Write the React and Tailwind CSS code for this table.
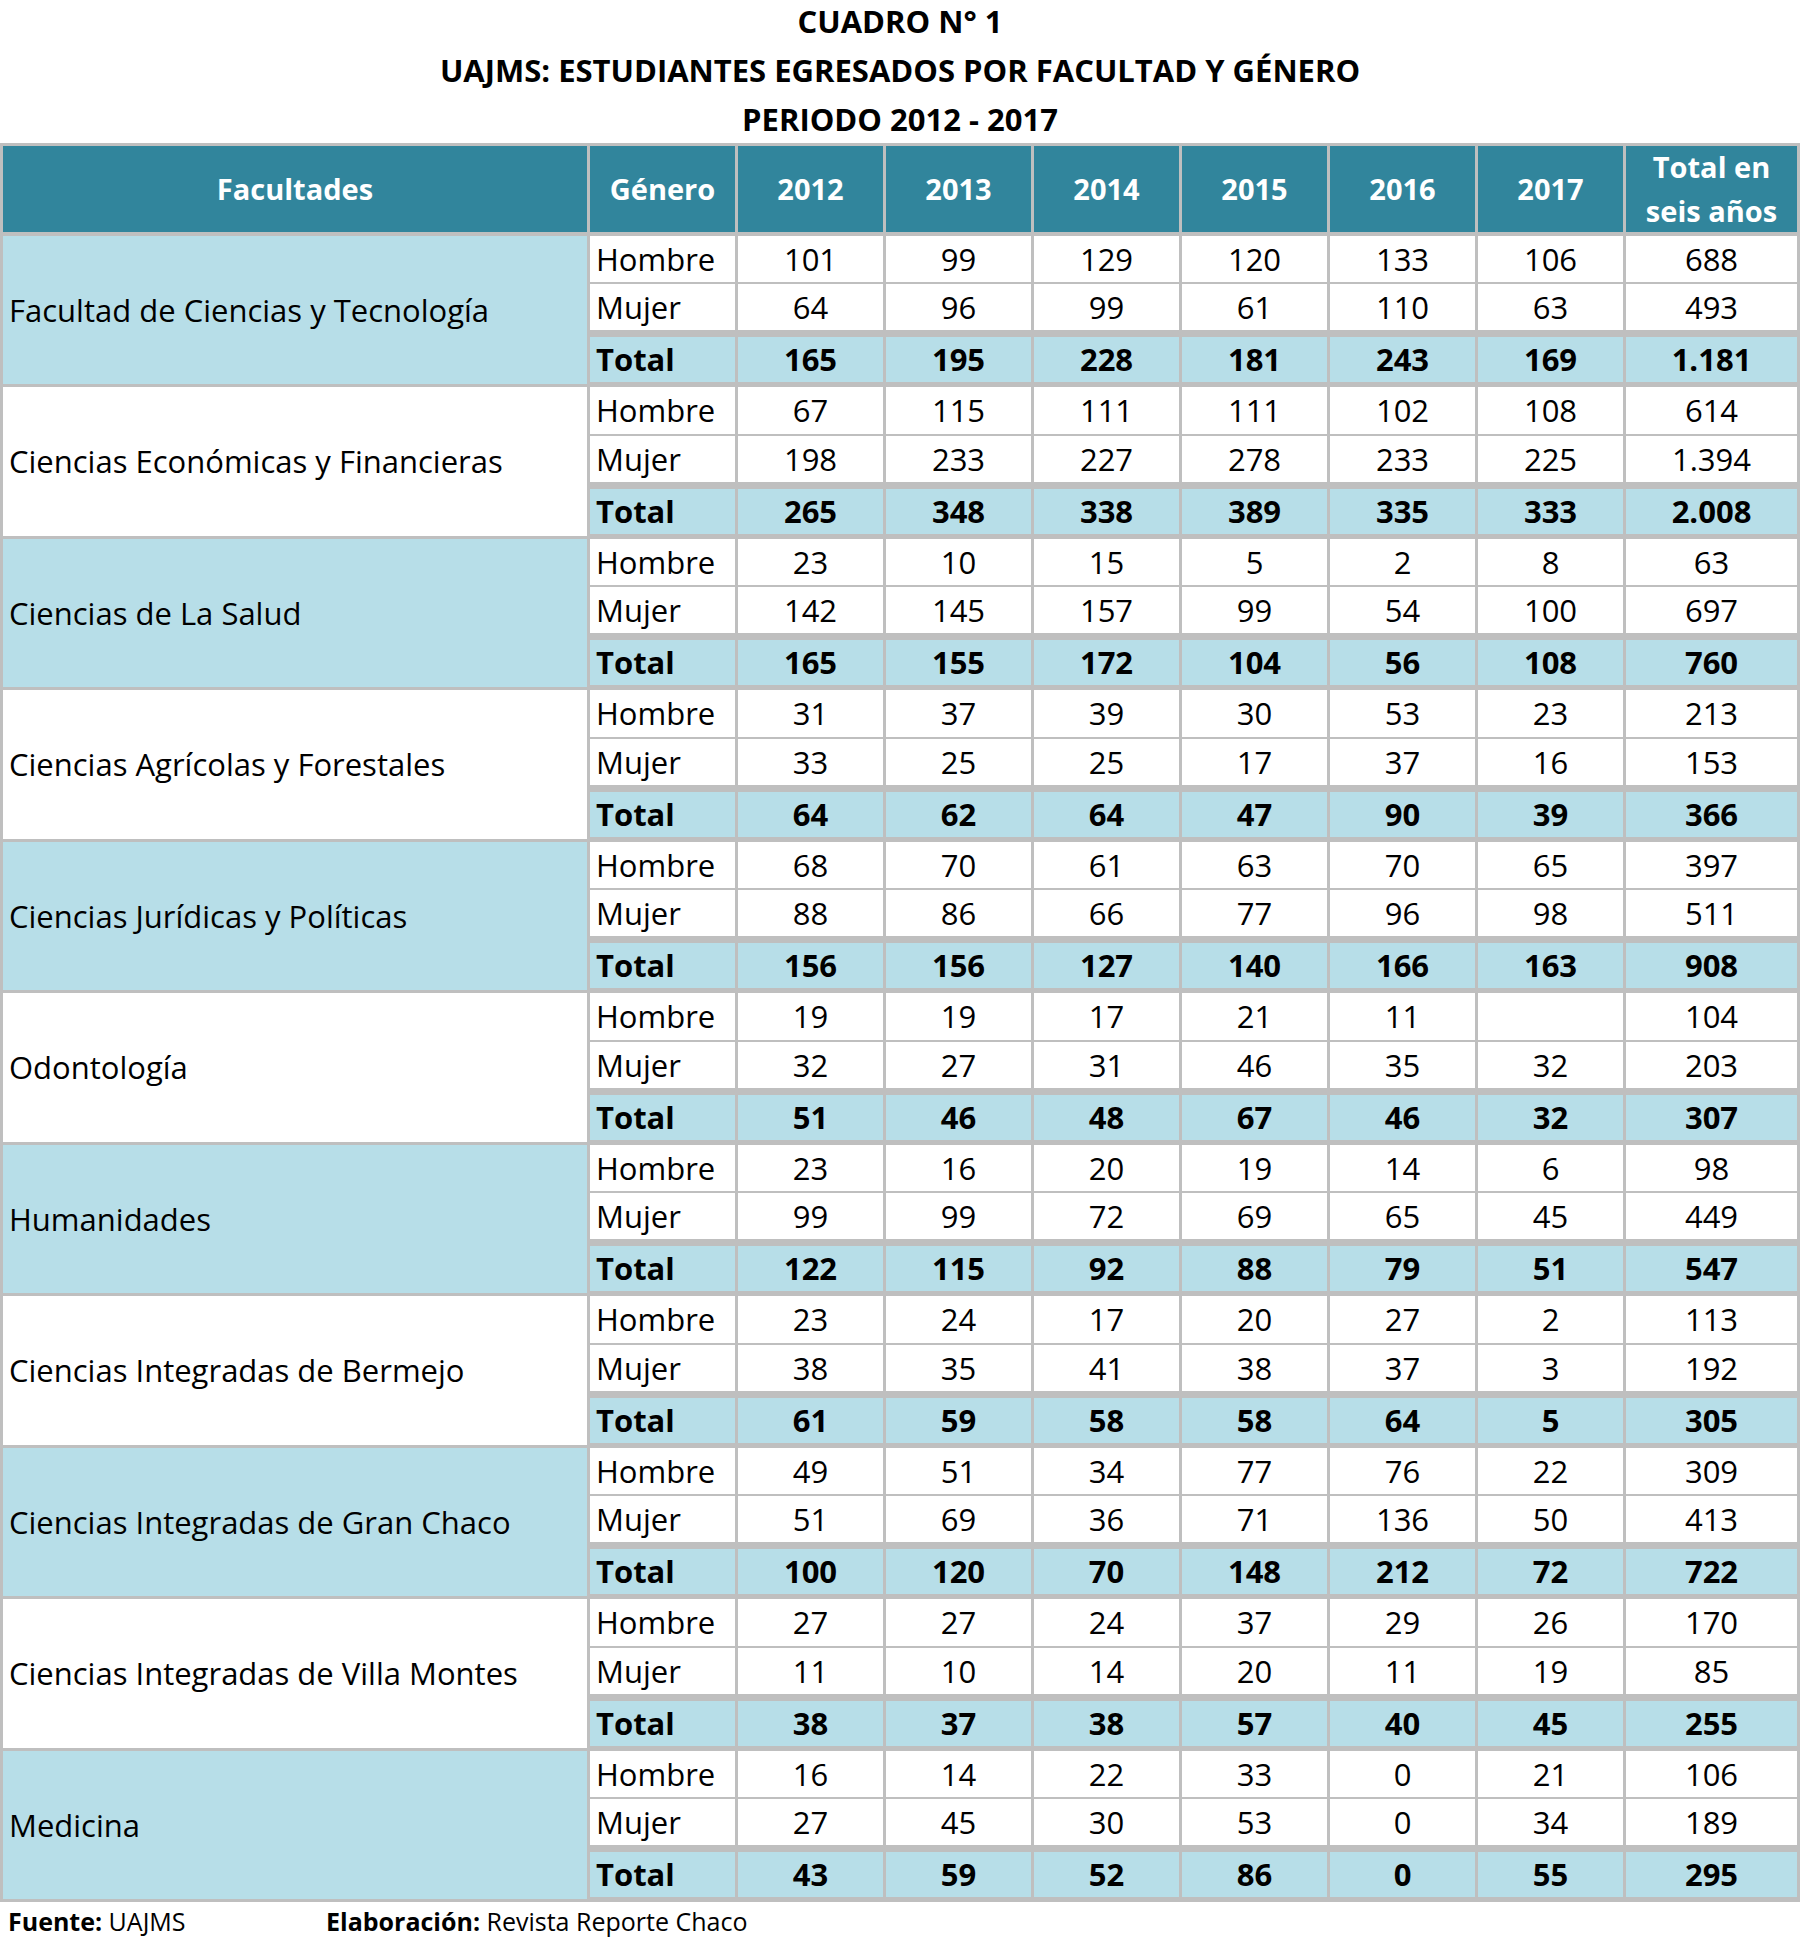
import React from 'react';

const facultades = [
    {
        nombre: 'Facultad de Ciencias y Tecnología',
        hombre: ['101', '99', '129', '120', '133', '106', '688'],
        mujer: ['64', '96', '99', '61', '110', '63', '493'],
        total: ['165', '195', '228', '181', '243', '169', '1.181'],
    },
    {
        nombre: 'Ciencias Económicas y Financieras',
        hombre: ['67', '115', '111', '111', '102', '108', '614'],
        mujer: ['198', '233', '227', '278', '233', '225', '1.394'],
        total: ['265', '348', '338', '389', '335', '333', '2.008'],
    },
    {
        nombre: 'Ciencias de La Salud',
        hombre: ['23', '10', '15', '5', '2', '8', '63'],
        mujer: ['142', '145', '157', '99', '54', '100', '697'],
        total: ['165', '155', '172', '104', '56', '108', '760'],
    },
    {
        nombre: 'Ciencias Agrícolas y Forestales',
        hombre: ['31', '37', '39', '30', '53', '23', '213'],
        mujer: ['33', '25', '25', '17', '37', '16', '153'],
        total: ['64', '62', '64', '47', '90', '39', '366'],
    },
    {
        nombre: 'Ciencias Jurídicas y Políticas',
        hombre: ['68', '70', '61', '63', '70', '65', '397'],
        mujer: ['88', '86', '66', '77', '96', '98', '511'],
        total: ['156', '156', '127', '140', '166', '163', '908'],
    },
    {
        nombre: 'Odontología',
        hombre: ['19', '19', '17', '21', '11', '', '104'],
        mujer: ['32', '27', '31', '46', '35', '32', '203'],
        total: ['51', '46', '48', '67', '46', '32', '307'],
    },
    {
        nombre: 'Humanidades',
        hombre: ['23', '16', '20', '19', '14', '6', '98'],
        mujer: ['99', '99', '72', '69', '65', '45', '449'],
        total: ['122', '115', '92', '88', '79', '51', '547'],
    },
    {
        nombre: 'Ciencias Integradas de Bermejo',
        hombre: ['23', '24', '17', '20', '27', '2', '113'],
        mujer: ['38', '35', '41', '38', '37', '3', '192'],
        total: ['61', '59', '58', '58', '64', '5', '305'],
    },
    {
        nombre: 'Ciencias Integradas de Gran Chaco',
        hombre: ['49', '51', '34', '77', '76', '22', '309'],
        mujer: ['51', '69', '36', '71', '136', '50', '413'],
        total: ['100', '120', '70', '148', '212', '72', '722'],
    },
    {
        nombre: 'Ciencias Integradas de Villa Montes',
        hombre: ['27', '27', '24', '37', '29', '26', '170'],
        mujer: ['11', '10', '14', '20', '11', '19', '85'],
        total: ['38', '37', '38', '57', '40', '45', '255'],
    },
    {
        nombre: 'Medicina',
        hombre: ['16', '14', '22', '33', '0', '21', '106'],
        mujer: ['27', '45', '30', '53', '0', '34', '189'],
        total: ['43', '59', '52', '86', '0', '55', '295'],
    },
];

const years = ['2012', '2013', '2014', '2015', '2016', '2017'];

function DataRow({ label, values, height, bg }) {
    return (
        <div className={`flex gap-[3px] ${height}`}>
            <div className={`w-[145px] flex items-center pl-[6px] ${bg}`}>{label}</div>
            {values.map((v, i) => (
                <div
                    key={i}
                    className={`${i === 6 ? 'flex-1' : 'w-[145px]'} flex items-center justify-center ${bg}`}
                >
                    {v}
                </div>
            ))}
        </div>
    );
}

function App() {
    return (
        <div className="w-[1800px] h-[1942px] bg-white text-black font-['Open_Sans',sans-serif]">
            <div className="h-[143px] flex flex-col overflow-hidden text-center font-bold text-[31px] leading-[49px]">
                <div className="-mt-[3px]">CUADRO N° 1</div>
                <div>UAJMS: ESTUDIANTES EGRESADOS POR FACULTAD Y GÉNERO</div>
                <div>PERIODO 2012 - 2017</div>
            </div>

            <div className="bg-[#bfbfbf] p-[3px] flex flex-col gap-[3px] text-[31px]">
                <div className="flex gap-[3px] h-[86px] mb-[1px] text-white font-bold text-[29px]">
                    <div className="w-[584px] bg-[#31859c] flex items-center justify-center">Facultades</div>
                    <div className="w-[145px] bg-[#31859c] flex items-center justify-center">Género</div>
                    {years.map(y => (
                        <div key={y} className="w-[145px] bg-[#31859c] flex items-center justify-center">{y}</div>
                    ))}
                    <div className="flex-1 bg-[#31859c] flex flex-col items-center justify-center leading-[44px]">
                        <span>Total en</span>
                        <span>seis años</span>
                    </div>
                </div>

                {facultades.map((f, index) => (
                    <div key={f.nombre} className="flex gap-[3px]">
                        <div
                            className={`w-[584px] flex items-center pl-[6px] ${index % 2 === 0 ? 'bg-[#b7dee8]' : 'bg-white'}`}
                        >
                            {f.nombre}
                        </div>
                        <div className="flex-1 flex flex-col pb-[2px]">
                            <DataRow
                                label="Hombre"
                                values={f.hombre}
                                height={index % 2 === 1 ? 'h-[47px]' : 'h-[46px]'}
                                bg="bg-white"
                            />
                            <div className="h-[2px]" />
                            <DataRow label="Mujer" values={f.mujer} height="h-[46px]" bg="bg-white" />
                            <div className="h-[7px]" />
                            <div className="font-bold">
                                <DataRow label="Total" values={f.total} height="h-[45px]" bg="bg-[#b7dee8]" />
                            </div>
                        </div>
                    </div>
                ))}
            </div>

            <div className="flex h-[40px] items-center text-[25px] pl-[8px]">
                <div className="w-[318px]">
                    <span className="font-bold">Fuente:</span> UAJMS
                </div>
                <div>
                    <span className="font-bold">Elaboración:</span> Revista Reporte Chaco
                </div>
            </div>
        </div>
    );
}

export default App;
